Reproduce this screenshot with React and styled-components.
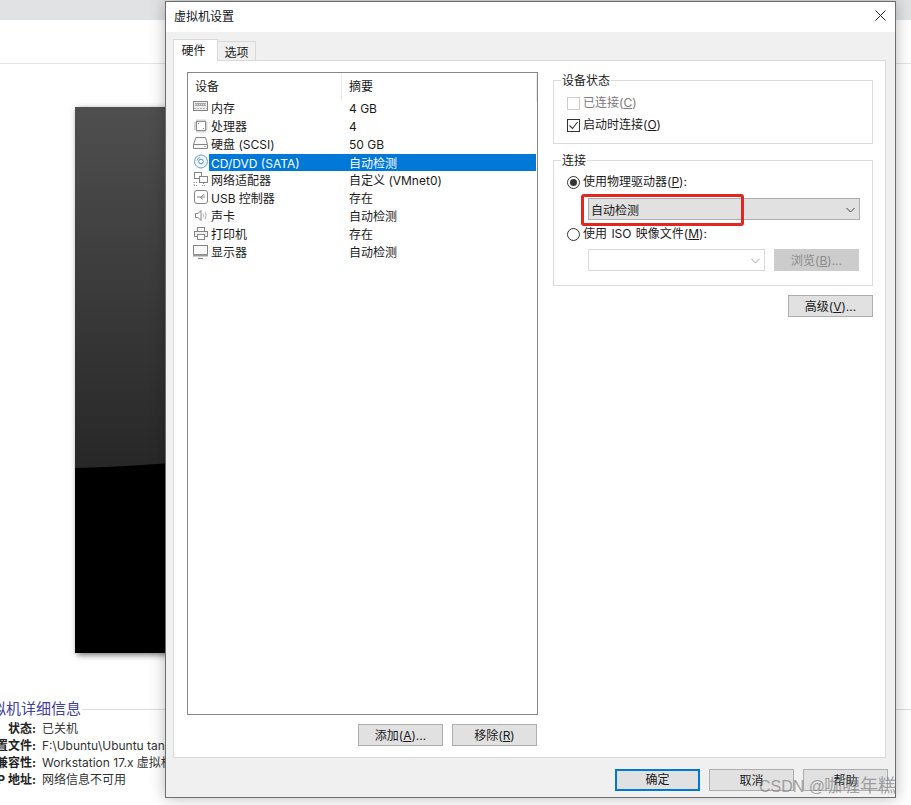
import React from "react";
import styled, { createGlobalStyle, css } from "styled-components";

const Global = createGlobalStyle`
  html, body { margin: 0; padding: 0; background: #fff; }
  body { font-family: Inter, "Noto Sans CJK SC", "Noto Sans", sans-serif; font-size: 12px; color: #1a1a1a; }
  * { box-sizing: border-box; }
`;

const Page = styled.div`
  position: relative; width: 911px; height: 805px; overflow: hidden; background: #fff;
`;
const TopStrip = styled.div`height: 20px; background: #e1e2e4;`;
const ToolBand = styled.div`height: 44px; border-bottom: 1px solid #e4e4e4; background: #fff;`;
const Preview = styled.div`
  position: relative; margin: 43px 0 0 75px; width: 200px; height: 546px; overflow: hidden;
  background: #000; box-shadow: 2px 2px 6px rgba(0,0,0,.55);
`;
const PreviewArt = styled.svg`display: block; width: 200px; height: 546px;`;

const Details = styled.section`margin: 46px 0 0;`;
const DetailsHead = styled.div`
  display: flex; align-items: center; gap: 1px; height: 20px; margin-left: -24px;
  font-size: 15px; line-height: 20px; color: #3f3fa0;
  &::after { content: ""; flex: 1; height: 1px; background: #dcdce0; }
`;
const DetailGrid = styled.div`
  display: grid; grid-template-columns: 96px 1fr; column-gap: 6px; grid-auto-rows: 17px;
  margin: 1px 0 0 -60px; line-height: 17px; white-space: nowrap;
`;
const DetailLabel = styled.div`font-weight: 700; text-align: right; color: #222;`;
const DetailValue = styled.div`color: #333;`;

const Dialog = styled.div`
  position: absolute; left: 165px; top: 1px; width: 731px; height: 797px;
  display: flex; flex-direction: column; background: #f0f0f0;
  border: 1px solid #6e6e6e; box-shadow: 0 0 14px rgba(0,0,0,.28);
`;
const TitleBar = styled.header`
  height: 30px; flex: none; display: flex; align-items: center; justify-content: space-between;
  padding: 0 9px 3px 8px; background: #fff; font-size: 12px; color: #111;
`;
const CloseIcon = styled.svg`width: 11px; height: 11px; display: block;`;
const DialogBody = styled.div`
  flex: 1; min-height: 0; display: flex; flex-direction: column; padding: 7px 9px 0 7px;
`;
const TabRow = styled.div`display: flex; align-items: flex-end; height: 21px; position: relative; z-index: 1;`;
const Tab = styled.div`
  display: flex; align-items: center; justify-content: center; line-height: 16px;
  ${p => p.$active ? css`
    width: 45px; height: 22px; margin-bottom: -1px; padding: 0 4px 0 0; background: #fff;
    border: 1px solid #d9d9d9; border-bottom: none;
  ` : css`
    width: 39px; height: 19px; margin-left: -1px; padding-top: 3px; background: #f0f0f0; border: 1px solid #d9d9d9; border-bottom: none;
  `}
`;
const TabPanel = styled.div`
  height: 698px; flex: none; display: grid; grid-template-columns: 351px 320px; column-gap: 15px;
  align-content: start; padding: 11px 0 0 13px; background: #fff; border: 1px solid #d9d9d9;
`;
const LeftCol = styled.div`display: flex; flex-direction: column;`;
const DeviceList = styled.div`height: 643px; background: #fff; border: 1px solid #828790;`;
const ListHead = styled.div`
  display: grid; grid-template-columns: 154px 1fr; height: 24px; margin-bottom: 2px; line-height: 28px;
`;
const HeadCell = styled.div`
  padding-left: 7px; border-right: 1px solid #ececec;
`;
const Row = styled.div`display: flex; height: 18px; align-items: center; padding-left: 4px;`;
const IconBox = styled.svg`width: 16px; height: 16px; flex: none; display: block; margin-right: 1px;`;
const RowCells = styled.div`
  flex: 1; display: grid; grid-template-columns: 140px 1fr; height: 18px; line-height: 19px;
  white-space: nowrap; margin-right: 1px;
  ${p => p.$selected && css`background: #0078d7; color: #fff; height: 17px; line-height: 19px;`}
`;
const RowName = styled.span`padding-left: 2px;`;
const RowActions = styled.div`display: flex; justify-content: flex-end; gap: 9px; margin: 9px 1px 0 0;`;
const Btn = styled.button`
  width: 85px; height: 22px; padding: 1px 0 0; font: inherit; line-height: 18px; color: #1a1a1a;
  background: #e1e1e1; border: 1px solid #adadad; border-radius: 0;
  ${p => p.$primary && css`border: 2px solid #0078d7; padding-top: 0;`}
  ${p => p.$disabled && css`background: #cccccc; border-color: #cccccc; color: #8a8a8a;`}
  u { text-underline-offset: 1px; }
`;
const RightCol = styled.div`display: flex; flex-direction: column;`;
const Group = styled.fieldset`
  margin: ${p => p.$gap || 0}px 0 0; min-width: 0; border: 1px solid #dcdcdc;
  padding: ${p => p.$top}px 13px ${p => p.$bottom}px;
`;
const Legend = styled.legend`
  margin-left: -6px; padding: 1px 1px 0; line-height: 16px; font-size: 12px;
`;
const OptionRow = styled.div`
  display: flex; align-items: center; gap: 3px; height: 18px; line-height: 20px; white-space: nowrap;
  margin-top: ${p => p.$gap || 0}px; word-spacing: 1px;
  color: ${p => p.$muted ? "#7a7a7a" : "#1a1a1a"};
  u { text-underline-offset: 1px; }
`;
const Check = styled.span`
  display: flex; align-items: center; justify-content: center;
  width: 13px; height: 13px; flex: none; background: #fff;
  border: 1px solid ${p => p.$muted ? "#cccccc" : "#333"};
`;
const Radio = styled.span`
  display: flex; align-items: center; justify-content: center;
  width: 13px; height: 13px; flex: none; border-radius: 50%; background: #fff; border: 1px solid #333;
  &::after { content: ""; width: 7px; height: 7px; border-radius: 50%; background: ${p => p.$on ? "#333" : "transparent"}; }
`;
const Select = styled.div`
  display: flex; align-items: center; justify-content: space-between;
  height: 22px; padding: 1px 4px 0 2px;
  ${p => p.$disabled
    ? css`width: 177px; background: #fff; border: 1px solid #d9d9d9;`
    : css`width: 272px; margin: 7px 0 0 21px; background: #e1e1e1; border: 1px solid #adadad;`}
`;
const SelectRow = styled.div`display: flex; justify-content: space-between; width: 271px; margin: 6px 0 0 21px;`;
const Chevron = styled.svg`width: 9px; height: 6px; display: block;`;
const AdvancedRow = styled.div`display: flex; justify-content: flex-end; margin-top: 9px;`;
const Highlight = styled.div`
  position: absolute; left: 581px; top: 194px; width: 163px; height: 32px;
  border: 3px solid #e3271e; border-radius: 3px; pointer-events: none;
`;
const Footer = styled.footer`
  flex: 1; display: flex; justify-content: flex-end; align-items: flex-start; gap: 9px; padding: 11px 0 0; margin-right: -2px;
`;
const Watermark = styled.div`
  position: absolute; left: 759px; top: 775px; font-size: 16px; line-height: 22px; white-space: nowrap;
  color: rgba(110,110,110,.6); pointer-events: none;
  font-family: "Liberation Sans", "Noto Sans CJK SC", sans-serif;
`;
const WatermarkName = styled.span`font-size: 18px; margin-left: -1px;`;

const G = "#858585";
const icons = {
  memory: <><rect x="1.5" y="1.5" width="14" height="9" fill="#ececec" stroke={G}/><rect x="3" y="3" width="11" height="3" fill="#a8a8a8"/><path d="M3 4.5h11" stroke="#dcdcdc" strokeDasharray="1 1"/><path d="M2 8.5h13" stroke="#b5b5b5" strokeDasharray="2 1"/></>,
  cpu: <><rect x="4.5" y="3.5" width="9" height="9" fill="#fff" stroke={G}/><rect x="6" y="5" width="1" height="1" fill={G}/><rect x="11" y="10" width="1" height="1" fill={G}/><path d="M5 1.5v2M7 1.5v2M9 1.5v2M11 1.5v2M13 1.5v2M5 12.5v2M7 12.5v2M9 12.5v2M11 12.5v2M13 12.5v2M2 5h2.5M2 7h2.5M2 9h2.5M2 11h2.5M13.5 5h2M13.5 7h2M13.5 9h2M13.5 11h2" stroke="#a8a8a8"/></>,
  disk: <><path d="M4 1.5h9.5l2 7v4h-14v-4z" fill="#fafafa" stroke={G}/><path d="M1.5 8.5h14" stroke={G}/><path d="M12 10.5h2" stroke="#a0a0a0"/></>,
  cd: <><circle cx="9" cy="7.5" r="6.5" fill="#eef5fb" stroke="#6f9fc8"/><circle cx="9" cy="7.5" r="2.3" fill="#fff" stroke="#5a93c4"/><path d="M5 6.5a4 4 0 0 1 3-3" stroke="#7aa8d0" fill="none"/></>,
  net: <><rect x="2.5" y=".5" width="7" height="6" fill="#fff" stroke={G}/><rect x="7.5" y="4.5" width="8" height="6" fill="#fff" stroke={G}/><path d="M10 13.5h3M11.5 11v2.5M2 10.5h4M2 13.5h4M2 10v4" stroke="#9a9a9a" strokeDasharray="1 1"/></>,
  usb: <><rect x="2.5" y=".5" width="13" height="13" rx="2.5" fill="#fff" stroke={G}/><path d="M5 7h8M9 7l2-2h1.5M8 7l2 2h1" stroke="#8a8a8a" fill="none"/></>,
  sound: <><path d="M3.5 5.5h2.5l3-3v10l-3-3H3.5z" fill="#fff" stroke={G}/><path d="M11 5.5c.8 1.2.8 2.8 0 4M13 4c1.3 2 1.3 5 0 7" stroke="#a8a8a8" fill="none"/></>,
  printer: <><rect x="5.5" y="1.5" width="7" height="4" fill="#fff" stroke={G}/><rect x="2.5" y="5.5" width="13" height="5" fill="#f0f0f0" stroke={G}/><rect x="5.5" y="8.5" width="7" height="5" fill="#fff" stroke={G}/></>,
  monitor: <><rect x="1.5" y="1.5" width="14" height="9" fill="#f8f8f8" stroke={G}/><path d="M1 11.5h15" stroke="#9a9a9a" strokeWidth="2"/><path d="M6 14.5h5" stroke={G}/></>,
};

const rows = [
  ["memory", "内存", "4 GB"],
  ["cpu", "处理器", "4"],
  ["disk", "硬盘 (SCSI)", "50 GB"],
  ["cd", "CD/DVD (SATA)", "自动检测", true],
  ["net", "网络适配器", "自定义 (VMnet0)"],
  ["usb", "USB 控制器", "存在"],
  ["sound", "声卡", "自动检测"],
  ["printer", "打印机", "存在"],
  ["monitor", "显示器", "自动检测"],
];

const details = [
  ["状态:", "已关机"],
  ["配置文件:", "F:\\Ubuntu\\Ubuntu tan"],
  ["硬件兼容性:", "Workstation 17.x 虚拟机"],
  ["IP 地址:", "网络信息不可用"],
];

const ChevronDown = ({ color }) => (
  <Chevron viewBox="0 0 9 6"><path d="M.5 1l4 4 4-4" fill="none" stroke={color} strokeWidth="1"/></Chevron>
);

export default function App() {
  return (
    <Page>
      <Global />
      <TopStrip />
      <ToolBand />
      <Preview>
        <PreviewArt viewBox="0 0 200 546">
          <defs>
            <linearGradient id="sheen" x1="0" y1="0" x2="0" y2="1">
              <stop offset="0" stopColor="#4f4f4f"/>
              <stop offset="1" stopColor="#272727"/>
            </linearGradient>
          </defs>
          <path d="M0 0H200V345C140 353 70 359 0 361Z" fill="url(#sheen)"/>
        </PreviewArt>
      </Preview>
      <Details>
        <DetailsHead>虚拟机详细信息</DetailsHead>
        <DetailGrid>
          {details.map(([k, v]) => (
            <React.Fragment key={k}>
              <DetailLabel>{k}</DetailLabel>
              <DetailValue>{v}</DetailValue>
            </React.Fragment>
          ))}
        </DetailGrid>
      </Details>

      <Dialog>
        <TitleBar>
          <span>虚拟机设置</span>
          <CloseIcon viewBox="0 0 11 11"><path d="M.5.5l10 10M10.5.5l-10 10" stroke="#222" strokeWidth="1"/></CloseIcon>
        </TitleBar>
        <DialogBody>
          <TabRow>
            <Tab $active>硬件</Tab>
            <Tab>选项</Tab>
          </TabRow>
          <TabPanel>
            <LeftCol>
              <DeviceList>
                <ListHead>
                  <HeadCell>设备</HeadCell>
                  <HeadCell>摘要</HeadCell>
                </ListHead>
                {rows.map(([icon, name, summary, selected]) => (
                  <Row key={name}>
                    <IconBox viewBox="0 0 16 16">{icons[icon]}</IconBox>
                    <RowCells $selected={selected}>
                      <RowName>{name}</RowName>
                      <span>{summary}</span>
                    </RowCells>
                  </Row>
                ))}
              </DeviceList>
              <RowActions>
                <Btn>添加(<u>A</u>)...</Btn>
                <Btn>移除(<u>R</u>)</Btn>
              </RowActions>
            </LeftCol>
            <RightCol>
              <Group $top={5} $bottom={9}>
                <Legend>设备状态</Legend>
                <OptionRow $muted>
                  <Check $muted /><span>已连接(<u>C</u>)</span>
                </OptionRow>
                <OptionRow $gap={4}>
                  <Check>
                    <svg width="11" height="11" viewBox="0 0 11 11"><path d="M1.5 5.5l3 3 5-6.5" fill="none" stroke="#333" strokeWidth="1.1"/></svg>
                  </Check><span>启动时连接(<u>O</u>)</span>
                </OptionRow>
              </Group>
              <Group $gap={8} $top={4} $bottom={14}>
                <Legend>连接</Legend>
                <OptionRow>
                  <Radio $on /><span>使用物理驱动器(<u>P</u>):</span>
                </OptionRow>
                <Select>
                  <span>自动检测</span>
                  <ChevronDown color="#444" />
                </Select>
                <OptionRow $gap={5}>
                  <Radio /><span>使用 ISO 映像文件(<u>M</u>):</span>
                </OptionRow>
                <SelectRow>
                  <Select $disabled>
                    <span />
                    <ChevronDown color="#a6a6a6" />
                  </Select>
                  <Btn $disabled>浏览(<u>B</u>)...</Btn>
                </SelectRow>
              </Group>
              <AdvancedRow>
                <Btn>高级(<u>V</u>)...</Btn>
              </AdvancedRow>
            </RightCol>
          </TabPanel>
          <Footer>
            <Btn $primary>确定</Btn>
            <Btn>取消</Btn>
            <Btn>帮助</Btn>
          </Footer>
        </DialogBody>
      </Dialog>
      <Highlight />
      <Watermark>CSDN @<WatermarkName>咖喱年糕</WatermarkName></Watermark>
    </Page>
  );
}
